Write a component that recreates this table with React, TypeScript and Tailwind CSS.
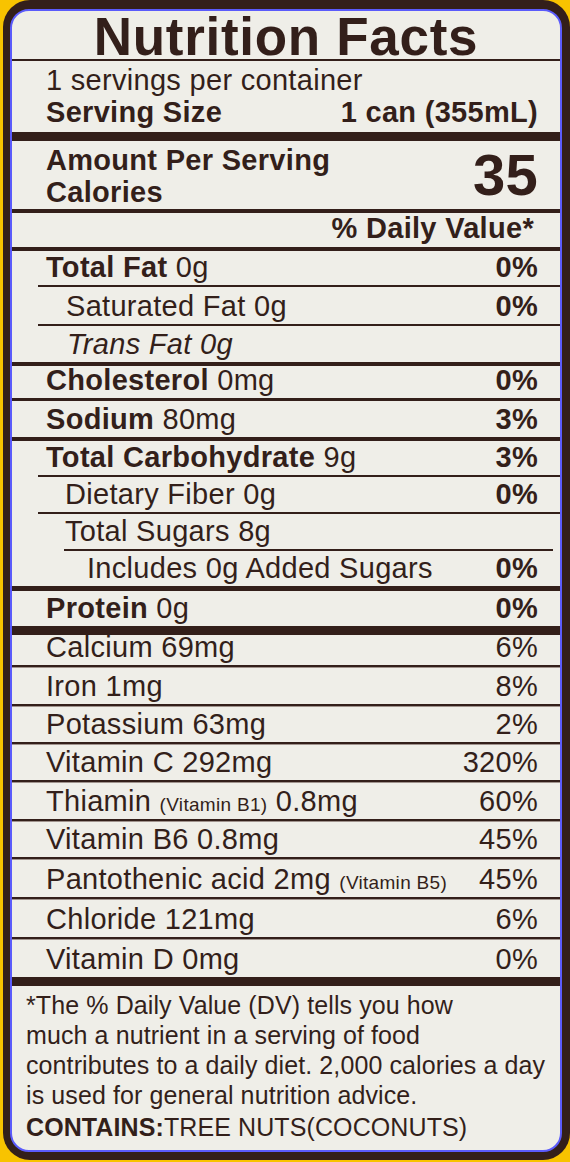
import React from "react";

const Row = ({
  h,
  pl = "pl-[34px]",
  italic = false,
  label,
  value,
}: {
  h: string;
  pl?: string;
  italic?: boolean;
  label: React.ReactNode;
  value?: React.ReactNode;
}) => (
  <div className={`${h} ${pl} pr-[22px] flex items-end justify-between`}>
    <span className={`leading-[36px] whitespace-nowrap ${italic ? "italic" : ""}`}>{label}</span>
    {value !== undefined && <span className="leading-[36px]">{value}</span>}
  </div>
);

const Line = ({ cls }: { cls: string }) => <div className={cls} />;

const vitLine = "h-[3px] border-t-2 border-[#331f1a] bg-[#a0938d]";

const vitamins: { label: React.ReactNode; value: string; h: string }[] = [
  { label: "Calcium 69mg", value: "6%", h: "h-[30px]" },
  { label: "Iron 1mg", value: "8%", h: "h-[36px]" },
  { label: "Potassium 63mg", value: "2%", h: "h-[35px]" },
  { label: "Vitamin C 292mg", value: "320%", h: "h-[35px]" },
  {
    label: (
      <>
        Thiamin <span className="text-[19px] leading-none">(Vitamin B1)</span> 0.8mg
      </>
    ),
    value: "60%",
    h: "h-[36px]",
  },
  { label: "Vitamin B6 0.8mg", value: "45%", h: "h-[35px]" },
  {
    label: (
      <>
        Pantothenic acid 2mg <span className="text-[19px] leading-none">(Vitamin B5)</span>
      </>
    ),
    value: "45%",
    h: "h-[37px]",
  },
  { label: "Chloride 121mg", value: "6%", h: "h-[37px]" },
  { label: "Vitamin D 0mg", value: "0%", h: "h-[37px]" },
];

export default function App() {
  return (
    <div className="w-[570px] h-[1162px] overflow-hidden bg-[#f8c300] font-['Liberation_Sans',Arial,sans-serif] text-[#331f1a] tracking-[0.3px]">
      <div className="ml-[3px] w-[567px] h-[1160px] rounded-[27px] bg-[#331f1a] pt-[9px] pl-[7px] pr-[8px] pb-[8px]">
        <div className="h-full rounded-[19px] border-2 border-[#5b5bfb] bg-[#efeee8] text-[29px]">
          {/* title */}
          <div className="h-[48px] text-center text-[53px] font-bold leading-[52px] tracking-[0.7px]">Nutrition Facts</div>
          <Line cls="h-[2px] bg-[#331f1a]" />

          {/* servings */}
          <div className="h-[71px] pt-[3px] pl-[34px] pr-[22px] leading-[32px]">
            <div>1 servings per container</div>
            <div className="flex justify-between font-bold">
              <span>Serving Size</span>
              <span>1 can (355mL)</span>
            </div>
          </div>
          <Line cls="h-[9px] bg-[#331f1a]" />

          {/* calories */}
          <div className="h-[68px] pl-[34px] pr-[22px] flex justify-between font-bold">
            <div className="pt-[3px] leading-[32px]">
              <div>Amount Per Serving</div>
              <div>Calories</div>
            </div>
            <div className="mt-[5px] text-[58px] leading-[58px]">35</div>
          </div>
          <Line cls="h-[4px] bg-[#331f1a]" />
          <div className="h-[34px] pr-[26px] text-right font-bold leading-[30px]">% Daily Value*</div>
          <Line cls="h-[4px] bg-[#331f1a]" />

          {/* nutrients */}
          <Row h="h-[34px]" label={<><b>Total Fat</b> 0g</>} value={<b>0%</b>} />
          <Line cls="ml-[26px] h-[2px] bg-[#331f1a]" />
          <Row h="h-[37px]" pl="pl-[54px]" label="Saturated Fat 0g" value={<b>0%</b>} />
          <Line cls="ml-[26px] h-[2px] bg-[#331f1a]" />
          <Row h="h-[36px]" pl="pl-[55px]" italic label="Trans Fat 0g" />
          <Line cls="h-[4px] bg-[#331f1a]" />
          <Row h="h-[32px]" label={<><b>Cholesterol</b> 0mg</>} value={<b>0%</b>} />
          <Line cls="h-[3px] bg-[#331f1a]" />
          <Row h="h-[36px]" label={<><b>Sodium</b> 80mg</>} value={<b>3%</b>} />
          <Line cls="h-[4px] bg-[#331f1a]" />
          <Row h="h-[34px]" label={<><b>Total Carbohydrate</b> 9g</>} value={<b>3%</b>} />
          <Line cls="ml-[26px] h-[2px] bg-[#331f1a]" />
          <Row h="h-[35px]" pl="pl-[53px]" label="Dietary Fiber 0g" value={<b>0%</b>} />
          <Line cls="ml-[26px] h-[2px] bg-[#331f1a]" />
          <Row h="h-[35px]" pl="pl-[53px]" label="Total Sugars 8g" />
          <Line cls="ml-[52px] mr-[7px] h-[2px] bg-[#331f1a]" />
          <Row h="h-[35px]" pl="pl-[75px]" label="Includes 0g Added Sugars" value={<b>0%</b>} />
          <Line cls="h-[5px] bg-[#331f1a]" />
          <Row h="h-[35px]" label={<><b>Protein</b> 0g</>} value={<b>0%</b>} />
          <Line cls="h-[9px] bg-[#331f1a]" />

          {/* vitamins & minerals */}
          {vitamins.map((v, i) => (
            <React.Fragment key={i}>
              {i > 0 && <Line cls={vitLine} />}
              <Row h={v.h} label={v.label} value={v.value} />
            </React.Fragment>
          ))}
          <Line cls="h-[9px] bg-[#331f1a]" />

          {/* footnote */}
          <div className="pt-[4px] pl-[14px] text-[25px] leading-[30px] tracking-[0.1px]">
            <p>
              *The % Daily Value (DV) tells you how
              <br />
              much a nutrient in a serving of food
              <br />
              contributes to a daily diet. 2,000 calories a day
              <br />
              is used for general nutrition advice.
            </p>
            <p className="leading-[34px]">
              <b>CONTAINS:</b>TREE NUTS(COCONUTS)
            </p>
          </div>
        </div>
      </div>
    </div>
  );
}
